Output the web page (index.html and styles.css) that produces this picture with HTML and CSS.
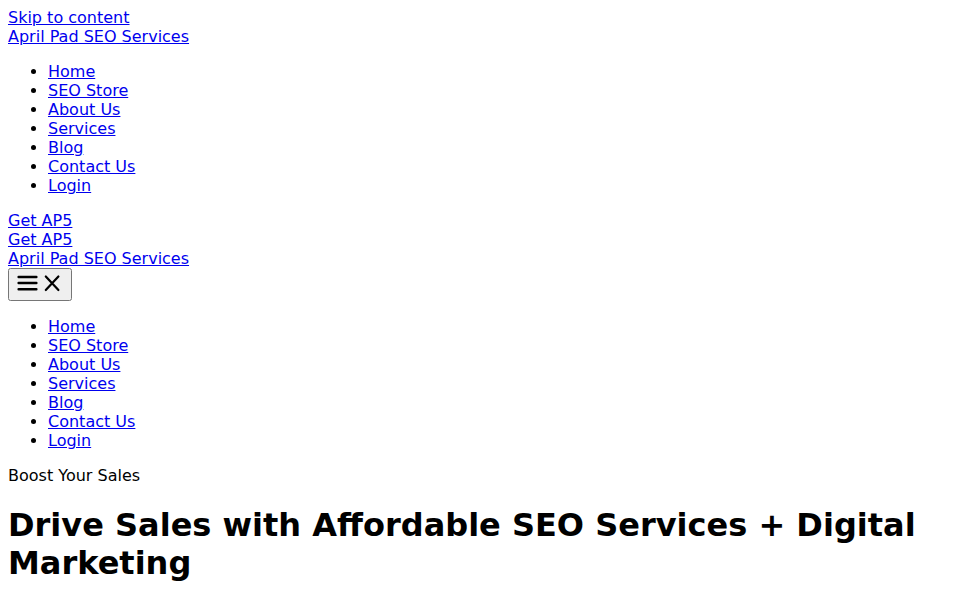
FILE: index.html
```html
<!DOCTYPE html>
<html lang="en">
<head>
<meta charset="utf-8">
<title>April Pad SEO Services</title>
<link rel="stylesheet" href="styles.css">
</head>
<body class="page">
<a class="skip-link" href="#content">Skip to content</a>
<header class="site-header">
<div class="site-branding"><a href="#">April Pad SEO Services</a></div>
<nav class="main-nav">
<ul class="menu">
<li><a href="#">Home</a></li>
<li><a href="#">SEO Store</a></li>
<li><a href="#">About Us</a></li>
<li><a href="#">Services</a></li>
<li><a href="#">Blog</a></li>
<li><a href="#">Contact Us</a></li>
<li><a href="#">Login</a></li>
</ul>
</nav>
<div class="header-cta"><a href="#">Get AP5</a></div>
<div class="mobile-cta"><a href="#">Get AP5</a></div>
<div class="mobile-branding"><a href="#">April Pad SEO Services</a></div>
<button class="menu-toggle" type="button" aria-label="Menu"><svg class="icon" viewBox="0 0 24 24" width="24" height="24" aria-hidden="true"><path d="M2.6 6h17.8M2.6 12h17.8M2.6 18.2h17.8" stroke="#000" stroke-width="2.4" stroke-linecap="round" fill="none"/></svg><svg class="icon" viewBox="0 0 24 24" width="24" height="24" aria-hidden="true"><path d="M5.8 5.5l12.6 13.5M18.4 5.5l-12.6 13.5" stroke="#000" stroke-width="2.2" stroke-linecap="round" fill="none"/></svg></button>
<nav class="mobile-nav">
<ul class="menu">
<li><a href="#">Home</a></li>
<li><a href="#">SEO Store</a></li>
<li><a href="#">About Us</a></li>
<li><a href="#">Services</a></li>
<li><a href="#">Blog</a></li>
<li><a href="#">Contact Us</a></li>
<li><a href="#">Login</a></li>
</ul>
</nav>
</header>
<main id="content" class="content">
<p class="eyebrow">Boost Your Sales</p>
<h1 class="hero-title">Drive Sales with Affordable SEO Services + Digital Marketing</h1>
</main>
</body>
</html>
```
FILE: styles.css
```css
.page {
  margin: 8px;
  font-family: "DejaVu Sans", sans-serif;
  font-size: 16px;
  color: #000;
  background: #fff;
}
.skip-link,
.site-branding,
.header-cta,
.mobile-cta,
.mobile-branding {
  display: block;
}
.menu {
  margin: 16px 0;
  padding-left: 40px;
}
.menu-toggle {
  display: inline-block;
  padding: 1px 6px;
}
.icon {
  display: inline;
  vertical-align: baseline;
}
.eyebrow {
  margin: 16px 0;
}
.hero-title {
  font-size: 32px;
  font-weight: bold;
  margin: 21.44px 0;
}
```
